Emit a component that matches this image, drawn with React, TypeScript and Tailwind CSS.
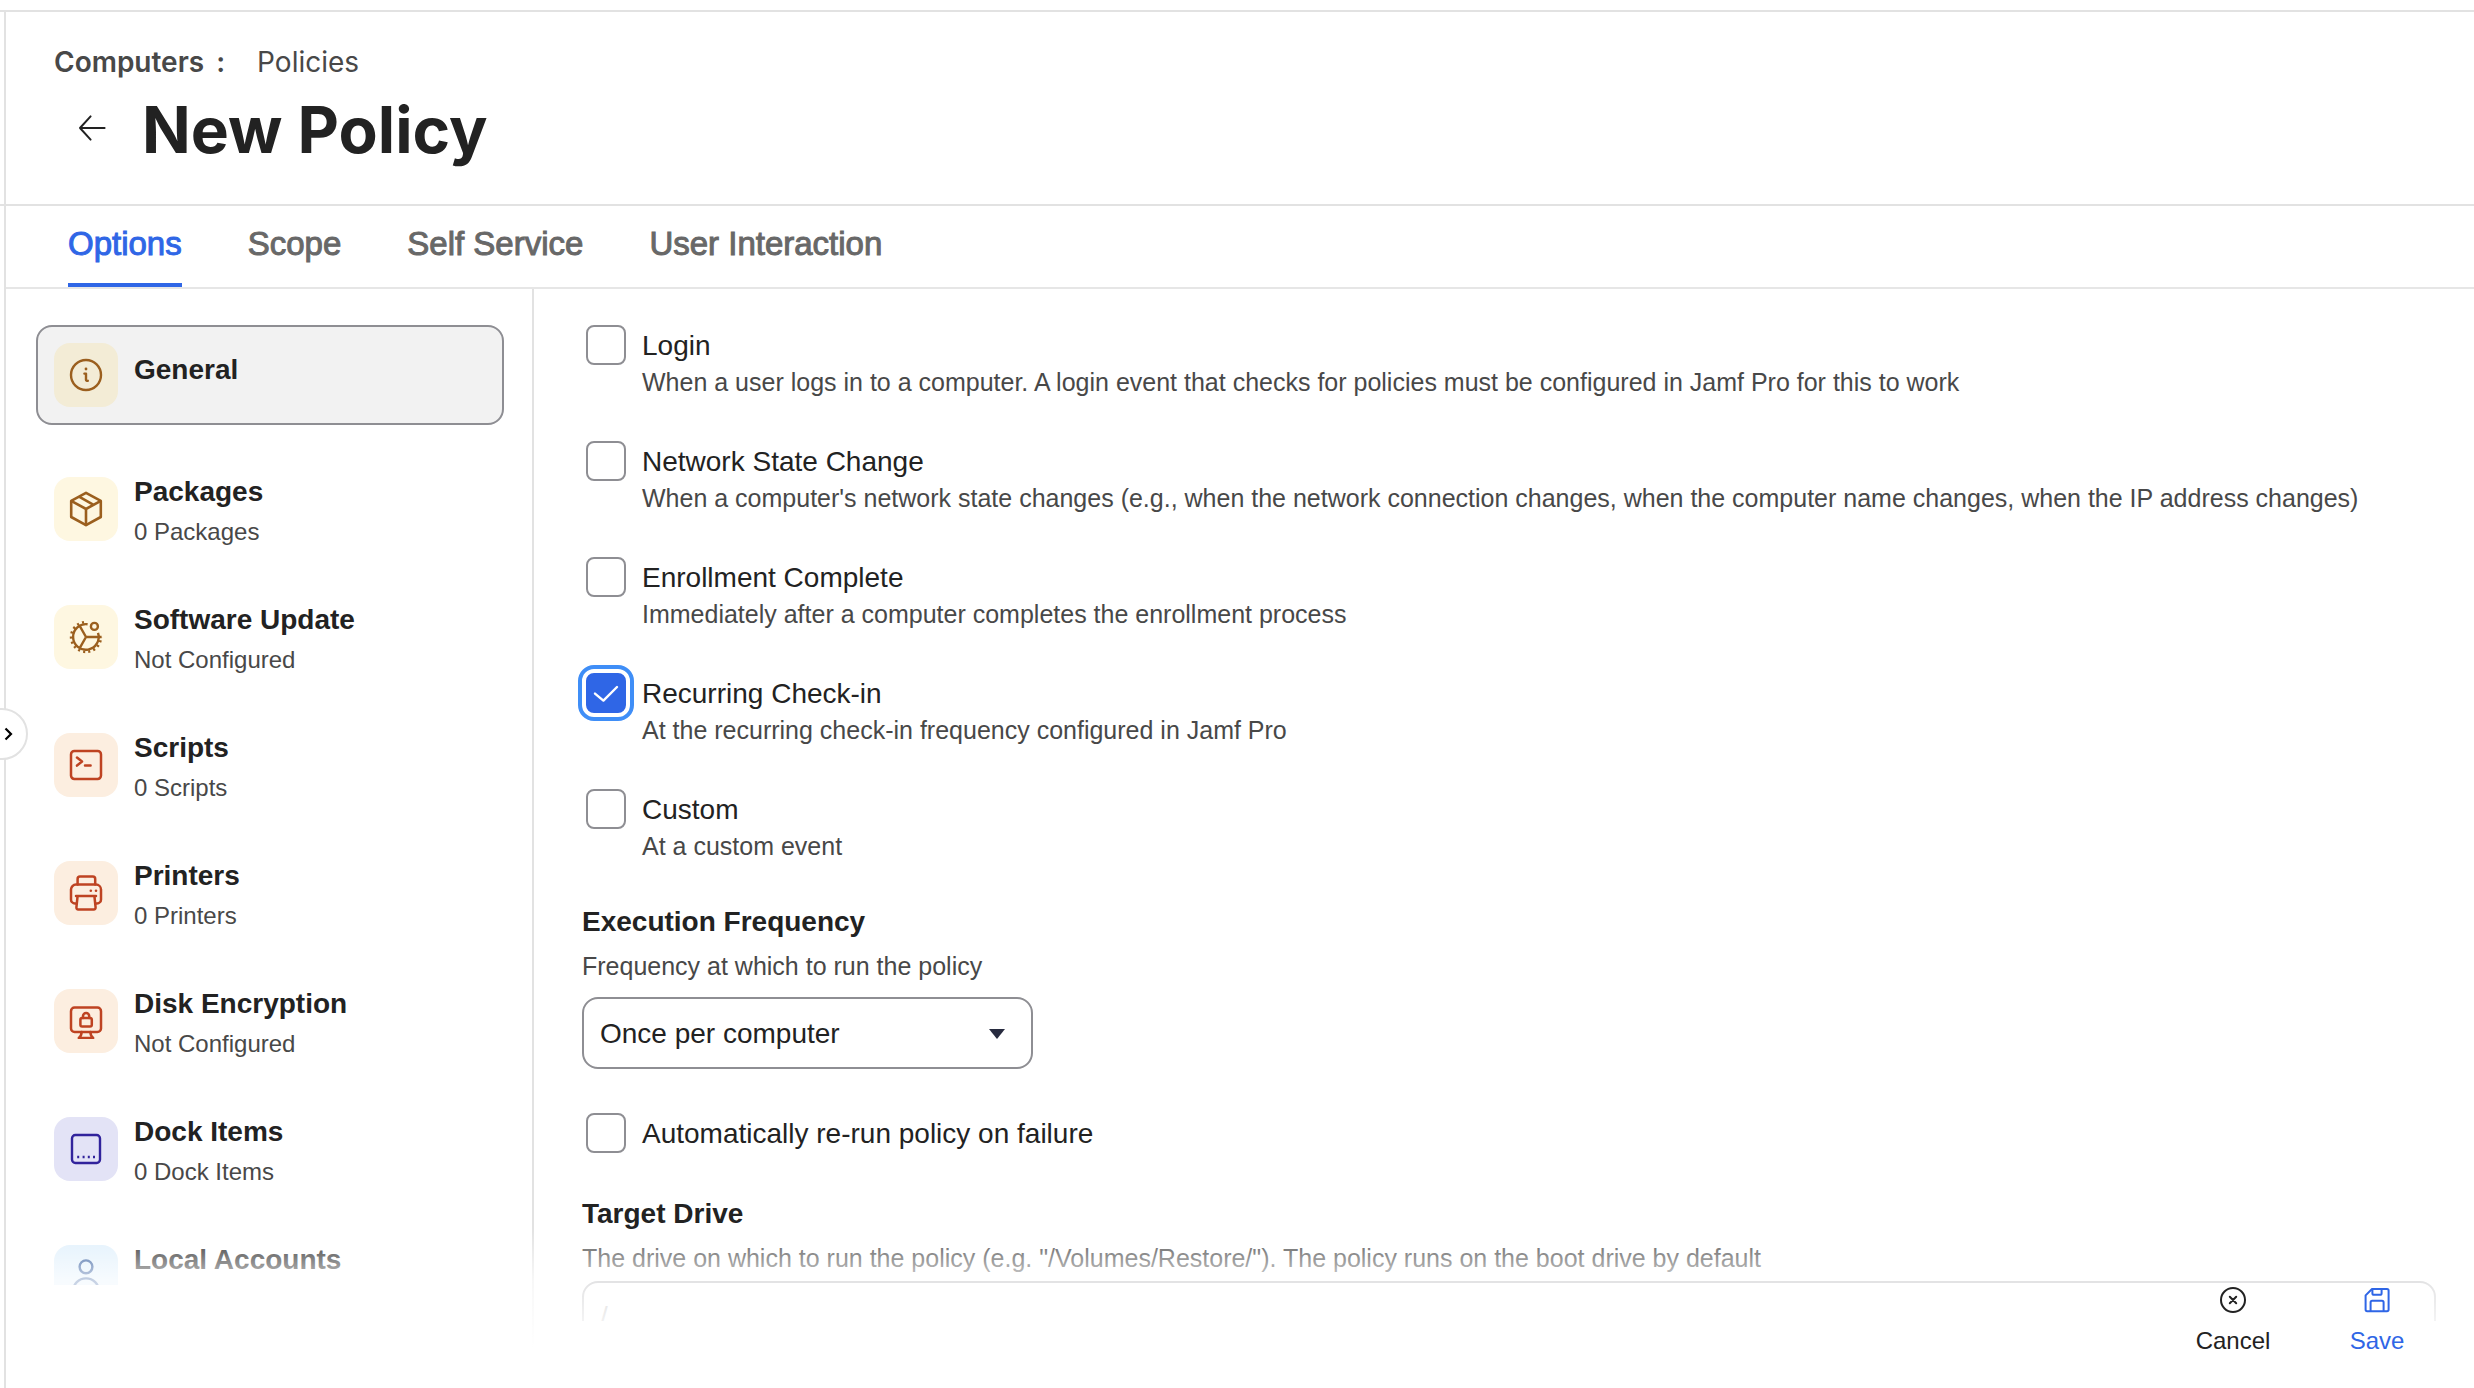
import { useState } from 'react';
import type { ReactNode } from 'react';

interface Payload {
    title: string;
    summary?: string;
    tile: string;
    icon: ReactNode;
}

interface Trigger {
    id: string;
    label: string;
    description: string;
}

const InfoIcon = () => (
    <svg viewBox="0 0 36 36" className="w-9 h-9" fill="none" stroke="currentColor" strokeWidth="2.4" strokeLinecap="round" strokeLinejoin="round">
        <circle cx="18" cy="18" r="15" />
        <path d="M16.4 16.6h1.6v6.2M18 22.8c0 1 .9 1.2 1.8 1" />
        <circle cx="18" cy="12" r="1.4" fill="currentColor" stroke="none" />
    </svg>
);

const PackageIcon = () => (
    <svg viewBox="0 0 36 36" className="w-9 h-9" fill="none" stroke="currentColor" strokeWidth="2.6" strokeLinejoin="round">
        <path d="M18 1.8 32.8 9.8v16.2L18 34.2 3.2 26V9.8z" />
        <path d="M3.2 9.8 18 18l14.8-8.2M18 18v16.4M11 5.6l14.6 8.2" />
    </svg>
);

const GearIcon = () => (
    <svg viewBox="0 0 36 36" className="w-9 h-9" fill="none" stroke="currentColor" strokeWidth="2.4">
        <path d="M19.6 5.3A12.8 12.8 0 1 0 30 13.8" />
        <path d="M16 3.2A14.9 14.9 0 1 0 32.9 18" strokeWidth="2.6" strokeDasharray="2.1 3.1" />
        <path d="M18 18h15.6M18 18 11.4 6.4M18 18l-6.6 11.6" />
        <circle cx="26.4" cy="7.4" r="3.5" />
    </svg>
);

const ScriptIcon = () => (
    <svg viewBox="0 0 36 36" className="w-9 h-9" fill="none" stroke="currentColor" strokeWidth="2.5" strokeLinecap="round" strokeLinejoin="round">
        <rect x="3" y="4" width="30" height="28" rx="3.4" />
        <path d="m9 10.6 5 4-5 4M17 18.4h5.6" />
    </svg>
);

const PrinterIcon = () => (
    <svg viewBox="0 0 36 36" className="w-9 h-9" fill="none" stroke="currentColor" strokeWidth="2.5" strokeLinecap="round" strokeLinejoin="round">
        <path d="M9.6 9.6V4a2.4 2.4 0 0 1 2.4-2.4h12.8A2.4 2.4 0 0 1 27.2 4v5.6" />
        <path d="M8.4 28.4H7a4 4 0 0 1-4-4V14.6a5 5 0 0 1 5-5h20a5 5 0 0 1 5 5v9.8a4 4 0 0 1-4 4h-1.4" />
        <path d="M8 21h20M9.6 21 8.4 32.4a1.8 1.8 0 0 0 1.8 2h15.6a1.8 1.8 0 0 0 1.8-2L26.4 21" />
        <circle cx="22.8" cy="15.8" r="1.3" fill="currentColor" stroke="none" />
        <circle cx="28" cy="15.8" r="1.3" fill="currentColor" stroke="none" />
    </svg>
);

const DiskIcon = () => (
    <svg viewBox="0 0 36 36" className="w-9 h-9" fill="none" stroke="currentColor" strokeWidth="2.5" strokeLinecap="round" strokeLinejoin="round">
        <rect x="3" y="4.6" width="30" height="24.4" rx="3.6" />
        <path d="M13.6 29c0 2.4-.8 4.4-2.8 6h14.4c-2-1.6-2.8-3.6-2.8-6" />
        <rect x="12.4" y="15" width="11.4" height="8.6" rx="1.8" />
        <path d="M15 15v-2a3.1 3.1 0 0 1 6.2 0v2" />
    </svg>
);

const DockIcon = () => (
    <svg viewBox="0 0 36 36" className="w-9 h-9" fill="none" stroke="currentColor" strokeWidth="2.4">
        <rect x="4" y="4" width="28" height="28" rx="3.4" />
        <path d="M9.2 26h2M14.6 26h2M19.8 26h2M25 26h2" />
    </svg>
);

const AccountIcon = () => (
    <svg viewBox="0 0 36 36" className="w-9 h-9" fill="none" stroke="currentColor" strokeWidth="2.4" strokeLinecap="round">
        <circle cx="18" cy="7.8" r="6.4" />
        <path d="M5 34v-1.6a13 13 0 0 1 26 0V34z" />
    </svg>
);

const payloads: Payload[] = [
    { title: 'General', tile: 'bg-[#f3ecd6] text-[#9b5f1e]', icon: <InfoIcon /> },
    { title: 'Packages', summary: '0 Packages', tile: 'bg-[#fef7e1] text-[#9b5f1e]', icon: <PackageIcon /> },
    { title: 'Software Update', summary: 'Not Configured', tile: 'bg-[#fef7e1] text-[#9b5f1e]', icon: <GearIcon /> },
    { title: 'Scripts', summary: '0 Scripts', tile: 'bg-[#fceee0] text-[#be4322]', icon: <ScriptIcon /> },
    { title: 'Printers', summary: '0 Printers', tile: 'bg-[#fceee0] text-[#be4322]', icon: <PrinterIcon /> },
    { title: 'Disk Encryption', summary: 'Not Configured', tile: 'bg-[#fceee0] text-[#be4322]', icon: <DiskIcon /> },
    { title: 'Dock Items', summary: '0 Dock Items', tile: 'bg-[#e3e3f6] text-[#31239c]', icon: <DockIcon /> },
    { title: 'Local Accounts', summary: '', tile: 'bg-[#e0f0fc] text-[#1f4b94]', icon: <AccountIcon /> },
];

const triggers: Trigger[] = [
    { id: 'login', label: 'Login', description: 'When a user logs in to a computer. A login event that checks for policies must be configured in Jamf Pro for this to work' },
    { id: 'network', label: 'Network State Change', description: "When a computer's network state changes (e.g., when the network connection changes, when the computer name changes, when the IP address changes)" },
    { id: 'enrollment', label: 'Enrollment Complete', description: 'Immediately after a computer completes the enrollment process' },
    { id: 'checkin', label: 'Recurring Check-in', description: 'At the recurring check-in frequency configured in Jamf Pro' },
    { id: 'custom', label: 'Custom', description: 'At a custom event' },
];

const tabs = ['Options', 'Scope', 'Self Service', 'User Interaction'];

interface CheckboxProps {
    id: string;
    label: string;
    description?: string;
    checked: boolean;
    onChange: () => void;
}

function Checkbox({ id, label, description, checked, onChange }: CheckboxProps) {
    return (
        <div className="ml-1 flex items-start gap-4">
            <span className="relative w-10 h-10 shrink-0">
                <input
                    id={id}
                    type="checkbox"
                    checked={checked}
                    onChange={onChange}
                    className="block w-10 h-10 appearance-none rounded-lg border-2 border-[#8e8e93] bg-white checked:border-[#2f66e6] checked:bg-[#2f66e6] checked:outline-4 checked:outline-offset-4 checked:outline-[#3f8ef7]"
                />
                {checked && (
                    <svg viewBox="0 0 40 40" className="absolute inset-0 w-10 h-10 pointer-events-none" fill="none" stroke="white" strokeWidth="2.4" strokeLinecap="round" strokeLinejoin="round">
                        <path d="m9 20.6 8.4 7L31 14" />
                    </svg>
                )}
            </span>
            <div>
                <label htmlFor={id} className="block text-[28px] leading-[42px]">{label}</label>
                {description && <p className="text-[25px] leading-[30px] text-[#484848]">{description}</p>}
            </div>
        </div>
    );
}

export default function App() {
    const [activeTab, setActiveTab] = useState('Options');
    const [activePayload, setActivePayload] = useState('General');
    const [enabled, setEnabled] = useState<string[]>(['checkin']);
    const [rerun, setRerun] = useState(false);

    const toggle = (id: string) => {
        setEnabled(enabled.includes(id) ? enabled.filter((e) => e !== id) : [...enabled, id]);
    };

    return (
        <div className="h-screen flex flex-col overflow-hidden bg-white text-[#222] font-['Liberation_Sans',Arial,sans-serif]">
            <div className="h-3 shrink-0 border-b-2 border-[#e2e2e2]" />

            <div className="flex-1 min-h-0 flex">
                {/* Collapsed navigation */}
                <aside className="relative z-10 w-[6px] shrink-0 border-r-2 border-[#e2e2e2]">
                    <div className="h-[194px] border-b-2 border-[#e2e2e2]" />
                    <button aria-label="Expand navigation" className="absolute -left-6 top-[696px] w-[52px] h-[52px] rounded-full border-2 border-[#e2e2e2] bg-white flex items-center justify-end pr-3">
                        <svg viewBox="0 0 10 14" className="w-[10px] h-[14px]" fill="none" stroke="black" strokeWidth="2.2">
                            <path d="m1.5 1.5 5.5 5.5-5.5 5.5" />
                        </svg>
                    </button>
                </aside>

                <div className="relative flex-1 min-w-0 flex flex-col">
                    {/* Header */}
                    <header className="h-[194px] shrink-0 border-b-2 border-[#e2e2e2] pl-12 pt-8 font-[Inter,sans-serif]">
                        <nav className="flex text-[28px] leading-9 text-[#484848]">
                            <a href="#computers" className="font-semibold">Computers</a>
                            <span className="ml-3 mr-8 font-semibold">:</span>
                            <a href="#policies">Policies</a>
                        </nav>
                        <div className="mt-2 flex items-start">
                            <button aria-label="Back" className="w-[76px] h-20 flex items-center justify-center">
                                <svg viewBox="0 0 28 28" className="w-7 h-7" fill="none" stroke="currentColor" strokeWidth="2" strokeLinecap="round" strokeLinejoin="round">
                                    <path d="M26.6 14H2M12.6 2.4 2 14l10.6 11.6" />
                                </svg>
                            </button>
                            <h1 className="ml-3 text-[64px] leading-[84px] font-bold">New Policy</h1>
                        </div>
                    </header>

                    {/* Tabs */}
                    <div role="tablist" className="h-[83px] shrink-0 border-b-2 border-[#e6e6e6] pl-[62px] flex gap-[66px]">
                        {tabs.map((tab) => (
                            <button
                                key={tab}
                                role="tab"
                                aria-selected={tab === activeTab}
                                onClick={() => setActiveTab(tab)}
                                className={`pb-0.5 border-b-4 text-[33px] leading-[36px] [-webkit-text-stroke:1px] ${tab === activeTab ? 'border-[#2f66e6] text-[#2f66e6]' : 'border-transparent text-[#686868]'}`}
                            >
                                {tab}
                            </button>
                        ))}
                    </div>

                    <div className="flex-1 min-h-0 flex">
                        {/* Payload list */}
                        <div className="w-[528px] shrink-0 border-r-2 border-[#e2e2e2] flex flex-col">
                            <nav className="flex-1 min-h-0 overflow-hidden mb-[103px] pt-9 pl-[30px] pr-7 flex flex-col gap-10">
                                {payloads.map((p) => (
                                    <button
                                        key={p.title}
                                        onClick={() => setActivePayload(p.title)}
                                        className={`shrink-0 flex items-center gap-4 px-4 text-left rounded-2xl border-2 ${p.title === activePayload ? 'h-[100px] border-[#8e8e93] bg-[#f2f2f2]' : 'h-[88px] border-transparent'}`}
                                    >
                                        <span className={`w-16 h-16 shrink-0 rounded-2xl flex items-center justify-center ${p.tile}`}>{p.icon}</span>
                                        <span className={p.summary === undefined ? 'pb-2.5' : ''}>
                                            <span className="block text-[28px] leading-[46px] font-bold">{p.title}</span>
                                            {p.summary !== undefined && <span className="block h-[34px] text-2xl leading-[34px] text-[#484848]">{p.summary}</span>}
                                        </span>
                                    </button>
                                ))}
                            </nav>
                        </div>

                        {/* Policy form */}
                        <main className="flex-1 min-w-0 overflow-hidden mb-[67px] pt-9 pl-12 pr-[38px]">
                            <div className="flex flex-col gap-11">
                                {triggers.map((t) => (
                                    <Checkbox key={t.id} {...t} checked={enabled.includes(t.id)} onChange={() => toggle(t.id)} />
                                ))}
                            </div>

                            <div className="mt-10 mb-11">
                                <label htmlFor="frequency" className="block text-[28px] leading-[42px] font-bold">Execution Frequency</label>
                                <p className="text-[25px] leading-[46px] text-[#484848]">Frequency at which to run the policy</p>
                                <div className="relative mt-2 w-[451px]">
                                    <select id="frequency" className="w-full h-[72px] appearance-none rounded-2xl border-2 border-[#8e8e93] bg-white px-4 pt-0.5 text-[28px]">
                                        <option>Once per computer</option>
                                        <option>Once per user</option>
                                        <option>Once every day</option>
                                        <option>Ongoing</option>
                                    </select>
                                    <svg viewBox="0 0 16 10" className="absolute right-7 top-8 w-4 h-[10px] pointer-events-none" fill="#272b3f">
                                        <path d="M0 0h16L8 10z" />
                                    </svg>
                                </div>
                            </div>

                            <Checkbox id="rerun" label="Automatically re-run policy on failure" checked={rerun} onChange={() => setRerun(!rerun)} />

                            <div className="mt-[38px]">
                                <label htmlFor="drive" className="block text-[28px] leading-[42px] font-bold">Target Drive</label>
                                <p className="text-[25px] leading-[46px] text-[#484848]">The drive on which to run the policy (e.g. "/Volumes/Restore/"). The policy runs on the boot drive by default</p>
                                <input id="drive" type="text" placeholder="/" className="block w-full h-[72px] rounded-2xl border-2 border-[#8e8e93] px-4 text-[28px] placeholder:text-[#757575]" />
                            </div>
                        </main>
                    </div>

                    {/* Actions float over the end of the form */}
                    <footer className="absolute inset-x-0 bottom-0 h-40 pr-[25px] pb-[31px] flex items-end justify-end bg-linear-to-b from-white/0 via-white/75 via-33% to-white to-75%">
                        <button className="w-36 flex flex-col items-center gap-[9px] text-2xl leading-8">
                            <svg viewBox="0 0 32 32" className="w-8 h-8" fill="none" stroke="currentColor" strokeWidth="2" strokeLinecap="round">
                                <circle cx="16" cy="16" r="12" />
                                <path d="m12.8 12.8 6.4 6.4M19.2 12.8l-6.4 6.4" />
                            </svg>
                            Cancel
                        </button>
                        <button className="w-36 flex flex-col items-center gap-[9px] text-2xl leading-8 text-[#2f66e6]">
                            <svg viewBox="0 0 32 32" className="w-8 h-8" fill="none" stroke="currentColor" strokeWidth="2" strokeLinejoin="round">
                                <path d="M11 5h15a1.6 1.6 0 0 1 1.6 1.6v19A1.6 1.6 0 0 1 26 27.2H6.2a1.6 1.6 0 0 1-1.6-1.6V11.4z" />
                                <path d="M11.4 5v4.2a1.6 1.6 0 0 0 1.6 1.6h6a1.6 1.6 0 0 0 1.6-1.6V5M9.6 27v-8.6a1.6 1.6 0 0 1 1.6-1.6h9.8a1.6 1.6 0 0 1 1.6 1.6V27" />
                            </svg>
                            Save
                        </button>
                    </footer>
                </div>
            </div>
        </div>
    );
}
